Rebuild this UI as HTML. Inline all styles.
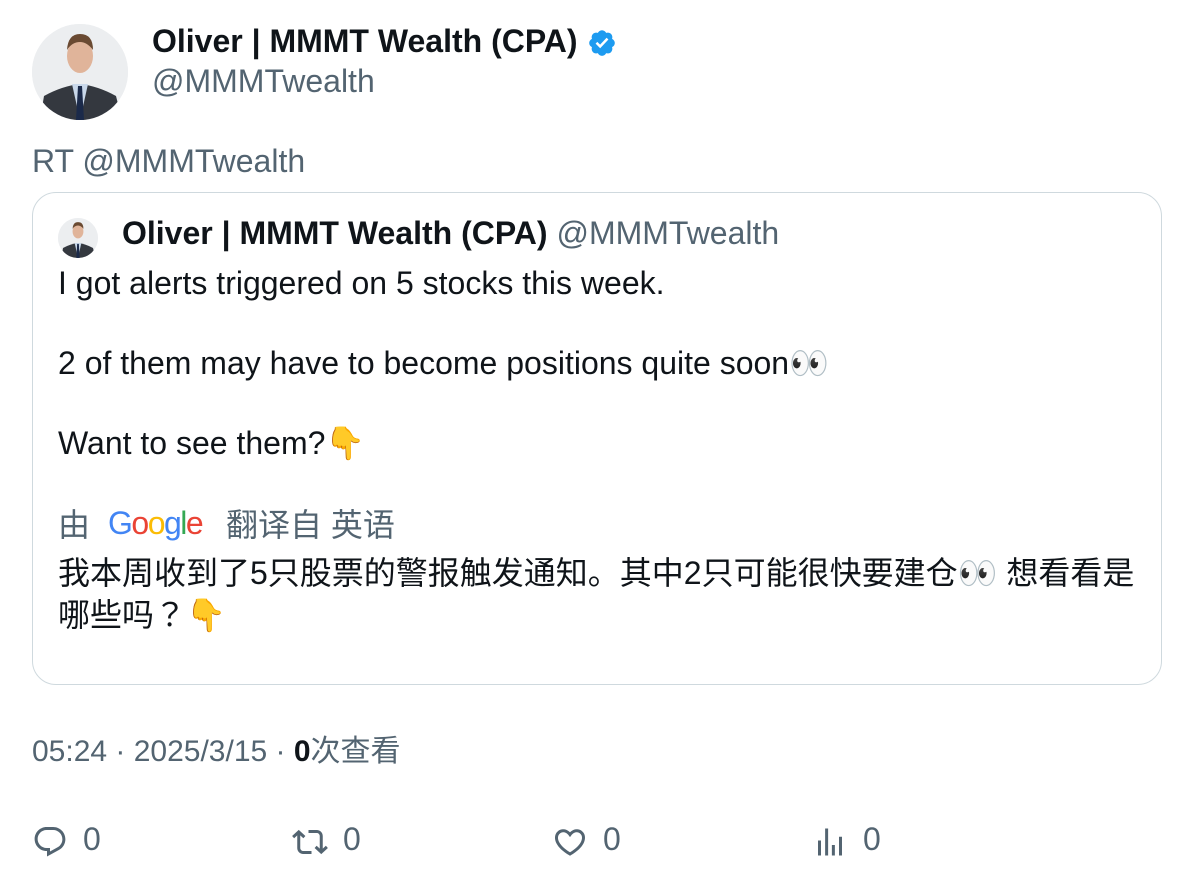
<!DOCTYPE html>
<html><head><meta charset="utf-8"><style>
body{margin:0;width:1196px;height:886px;background:#fff;font-family:"Liberation Sans","Noto Sans CJK SC",sans-serif;color:#0f1419;position:relative;overflow:hidden}
.a{position:absolute;white-space:nowrap;font-size:32px;line-height:40px}
.g{color:#536471}
.b{font-weight:bold}
.av{position:absolute;border-radius:50%;overflow:hidden;background:#eef0f2}
.cjk{font-family:"Noto Sans CJK JP",sans-serif}
</style></head><body>
<div class="av" style="left:32px;top:24px;width:96px;height:96px">
<svg width="96" height="96" viewBox="0 0 96 96"><rect width="96" height="96" fill="#eceef0"/><path d="M8 96 L12 72 Q30 62 48 60 Q66 62 84 72 L90 96Z" fill="#34383f"/><path d="M40 60 L48 96 L56 60Z" fill="#c9d8ea"/><path d="M46 62 L44 96 L52 96 L50 62Z" fill="#1b2a4a"/><ellipse cx="48" cy="32" rx="13" ry="17" fill="#e0b49a"/><path d="M35 26 Q36 10 48 10 Q61 10 61 26 Q55 18 48 18 Q40 18 35 26Z" fill="#6a4a32"/></svg></div>
<div class="a b" style="left:152px;top:21px">Oliver | MMMT Wealth (CPA)</div>
<svg style="position:absolute;left:587px;top:28px" width="30" height="30" viewBox="0 0 24 24"><path fill="#1d9bf0" d="M22.25 12c0-1.43-.88-2.67-2.19-3.34.46-1.39.2-2.9-.81-3.91s-2.52-1.27-3.91-.81c-.66-1.31-1.91-2.19-3.34-2.19s-2.67.88-3.33 2.19c-1.4-.46-2.91-.2-3.92.81s-1.26 2.52-.8 3.91c-1.31.67-2.2 1.91-2.2 3.34s.89 2.67 2.2 3.34c-.46 1.39-.21 2.9.8 3.91s2.52 1.26 3.91.81c.67 1.31 1.91 2.19 3.34 2.19s2.68-.88 3.34-2.19c1.39.45 2.9.2 3.91-.81s1.27-2.52.81-3.91c1.31-.67 2.19-1.91 2.19-3.34z"/><path fill="#fff" d="M10.54 16.2l-3.67-3.67 1.41-1.41 2.2 2.2 5.2-5.5 1.46 1.37z"/></svg>
<div class="a g" style="left:152px;top:61px">@MMMTwealth</div>
<div class="a g" style="left:32px;top:141px">RT @MMMTwealth</div>
<div style="position:absolute;left:32px;top:192px;width:1128px;height:491px;border:1.5px solid #cfd9de;border-radius:24px"></div>
<div class="av" style="left:58px;top:218px;width:40px;height:40px">
<svg width="40" height="40" viewBox="0 0 96 96"><rect width="96" height="96" fill="#eceef0"/><path d="M8 96 L12 72 Q30 62 48 60 Q66 62 84 72 L90 96Z" fill="#34383f"/><path d="M40 60 L48 96 L56 60Z" fill="#c9d8ea"/><path d="M46 62 L44 96 L52 96 L50 62Z" fill="#1b2a4a"/><ellipse cx="48" cy="32" rx="13" ry="17" fill="#e0b49a"/><path d="M35 26 Q36 10 48 10 Q61 10 61 26 Q55 18 48 18 Q40 18 35 26Z" fill="#6a4a32"/></svg></div>
<div class="a" style="left:122px;top:213px"><span class="b">Oliver | MMMT Wealth (CPA)</span> <span class="g">@MMMTwealth</span></div>
<div class="a" style="left:58px;top:263px">I got alerts triggered on 5 stocks this week.</div>
<div class="a" style="left:58px;top:343px">2 of them may have to become positions quite soon👀</div>
<div class="a" style="left:58px;top:423px">Want to see them?👇</div>
<div class="a g" style="left:58px;top:505px">由</div>
<div class="a" style="left:108px;top:503px;font-size:32px;letter-spacing:-1.5px"><span style="color:#4285f4">G</span><span style="color:#ea4335">o</span><span style="color:#fbbc05">o</span><span style="color:#4285f4">g</span><span style="color:#34a853">l</span><span style="color:#ea4335">e</span></div>
<div class="a g" style="left:226px;top:505px">翻译自 英语</div>
<div class="a" style="left:58px;top:553px">我本周收到了5只股票的警报触发通知。其中2只可能很快要建仓👀 想看看是</div>
<div class="a" style="left:58px;top:593px">哪些吗<span class="cjk">？</span>👇</div>
<div class="a g" style="left:32px;top:732px;font-size:30px">05:24 · 2025/3/15 · <span class="b" style="color:#0f1419">0</span>次查看</div>
<svg style="position:absolute;left:32px;top:824px" width="36" height="36" viewBox="0 0 24 24"><path fill="#536471" d="M1.751 10c0-4.42 3.584-8 8.005-8h4.366c4.49 0 8.129 3.64 8.129 8.13 0 2.96-1.607 5.68-4.196 7.11l-8.054 4.46v-3.69h-.067c-4.49.1-8.183-3.51-8.183-8.01zm8.005-6c-3.317 0-6.005 2.69-6.005 6 0 3.37 2.77 6.08 6.138 6.01l.351-.01h1.761v2.3l5.087-2.81c1.951-1.08 3.163-3.13 3.163-5.36 0-3.39-2.744-6.13-6.129-6.13H9.756z"/></svg>
<div class="a g" style="left:83px;top:819px">0</div>
<svg style="position:absolute;left:292px;top:824px" width="36" height="36" viewBox="0 0 24 24"><path fill="#536471" d="M4.5 3.88l4.432 4.14-1.364 1.46L5.5 7.55V16c0 1.1.896 2 2 2H13v2H7.5c-2.209 0-4-1.79-4-4V7.55L1.432 9.48.068 8.02 4.5 3.88zM16.5 6H11V4h5.5c2.209 0 4 1.79 4 4v8.45l2.068-1.93 1.364 1.46-4.432 4.14-4.432-4.14 1.364-1.46 2.068 1.93V8c0-1.1-.896-2-2-2z"/></svg>
<div class="a g" style="left:343px;top:819px">0</div>
<svg style="position:absolute;left:552px;top:824px" width="36" height="36" viewBox="0 0 24 24"><path fill="#536471" d="M16.697 5.5c-1.222-.06-2.679.51-3.89 2.16l-.805 1.09-.806-1.09C9.984 6.01 8.526 5.44 7.304 5.5c-1.243.07-2.349.78-2.91 1.91-.552 1.12-.633 2.78.479 4.82 1.074 1.97 3.257 4.27 7.129 6.61 3.87-2.34 6.052-4.64 7.126-6.61 1.111-2.04 1.03-3.7.477-4.82-.561-1.13-1.666-1.84-2.908-1.91zm4.187 7.69c-1.351 2.48-4.001 5.12-8.379 7.67l-.503.3-.504-.3c-4.379-2.55-7.029-5.19-8.382-7.67-1.36-2.5-1.41-4.86-.514-6.67.887-1.79 2.647-2.91 4.601-3.01 1.651-.09 3.368.56 4.798 2.01 1.429-1.45 3.146-2.1 4.796-2.01 1.954.1 3.714 1.22 4.601 3.01.896 1.81.846 4.17-.514 6.67z"/></svg>
<div class="a g" style="left:603px;top:819px">0</div>
<svg style="position:absolute;left:812px;top:824px" width="36" height="36" viewBox="0 0 24 24"><path fill="#536471" d="M8.75 21V3h2v18h-2zM18 21V8.5h2V21h-2zM4 21l.004-10h2L6 21H4zm9.248 0v-7h2v7h-2z"/></svg>
<div class="a g" style="left:863px;top:819px">0</div>
</body></html>
